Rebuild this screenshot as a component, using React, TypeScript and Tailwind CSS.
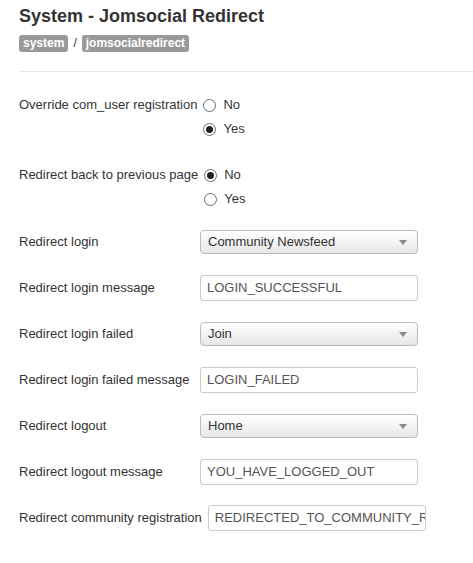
import React from "react";

type Row =
  | { kind: "select"; label: string; value: string }
  | { kind: "text"; label: string; value: string };

const ROWS: Row[] = [
  { kind: "select", label: "Redirect login", value: "Community Newsfeed" },
  { kind: "text", label: "Redirect login message", value: "LOGIN_SUCCESSFUL" },
  { kind: "select", label: "Redirect login failed", value: "Join" },
  { kind: "text", label: "Redirect login failed message", value: "LOGIN_FAILED" },
  { kind: "select", label: "Redirect logout", value: "Home" },
  { kind: "text", label: "Redirect logout message", value: "YOU_HAVE_LOGGED_OUT" },
  { kind: "text", label: "Redirect community registration", value: "REDIRECTED_TO_COMMUNITY_REGISTRATION" },
];

const Radio = ({ checked, text }: { checked: boolean; text: string }) => (
  <div className="flex h-[24px] items-center">
    <span className="flex h-[13px] w-[13px] items-center justify-center rounded-full border border-[#6b6b6b] bg-white">
      {checked && <span className="h-[7px] w-[7px] rounded-full bg-[#222]" />}
    </span>
    <span className="ml-[7px]">{text}</span>
  </div>
);

const Label = ({ children }: { children: React.ReactNode }) => (
  <div className="min-w-[181px] shrink-0 whitespace-nowrap pr-[6px]">{children}</div>
);

const App: React.FC = () => {
  return (
    <div className="min-h-[563px] bg-white pl-[19px] text-[13px] text-[#333] font-['Liberation_Sans',Arial,sans-serif]">
      {/* Header */}
      <h1 className="pt-[5px] text-[18px] leading-[22px] font-bold text-[#333]">
        System - Jomsocial Redirect
      </h1>
      <div className="mt-[8px] flex items-center gap-[5px] text-[12px] leading-[17px]">
        <span className="rounded-[3px] bg-[#999] px-[4px] font-bold text-white">system</span>
        <span className="text-[#333]">/</span>
        <span className="rounded-[3px] bg-[#999] px-[4px] font-bold text-white">jomsocialredirect</span>
      </div>
      <div className="mt-[19px] border-t border-[#e8e8e8]" />

      {/* Radio groups */}
      <div className="mt-[21px] flex">
        <div className="flex h-[24px] items-center">
          <Label>Override com_user registration</Label>
        </div>
        <div>
          <Radio checked={false} text="No" />
          <Radio checked text="Yes" />
        </div>
      </div>
      <div className="mt-[22px] flex">
        <div className="flex h-[24px] items-center">
          <Label>Redirect back to previous page</Label>
        </div>
        <div>
          <Radio checked text="No" />
          <Radio checked={false} text="Yes" />
        </div>
      </div>

      {/* Fields */}
      <div className="mt-[19px] flex flex-col gap-[22px]">
        {ROWS.map((r) => (
          <div key={r.label} className="flex h-[24px] items-center">
            <Label>{r.label}</Label>
            {r.kind === "select" ? (
              <div className="flex h-[24px] w-[218px] shrink-0 items-center justify-between rounded-[4px] border border-[#bbb] bg-gradient-to-b from-white to-[#e6e6e6] pl-[7px] pr-[10px]">
                <span className="text-[#333]">{r.value}</span>
                <svg width="8" height="5" viewBox="0 0 8 5">
                  <path d="M0 0h8L4 5z" fill="#8a8a8a" />
                </svg>
              </div>
            ) : (
              <div className="flex h-[26px] w-[218px] shrink-0 items-center overflow-hidden whitespace-nowrap rounded-[3px] border border-[#ccc] bg-white pl-[6px] text-[13px] text-[#555]">
                {r.value}
              </div>
            )}
          </div>
        ))}
      </div>
    </div>
  );
};

export default App;
